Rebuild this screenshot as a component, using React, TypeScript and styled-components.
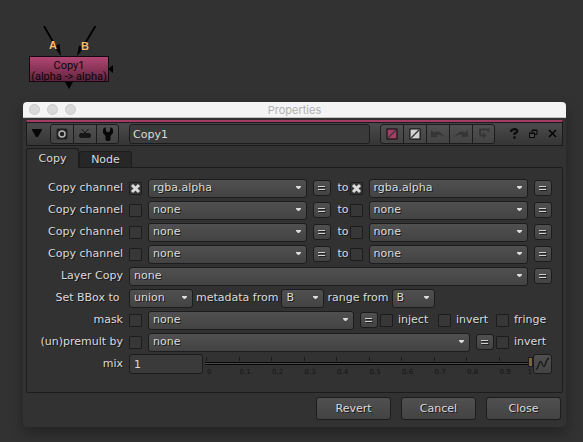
import React, { useState } from "react";
import styled, { createGlobalStyle, css } from "styled-components";

const GlobalStyle = createGlobalStyle`
  * { box-sizing: border-box; }
  body {
    margin: 0;
    background: #323232;
    color: #dadada;
    font: 11px/14px "DejaVu Sans", Verdana, sans-serif;
    overflow: hidden;
  }
  button, input, select { font: inherit; color: inherit; margin: 0; padding: 0; }
`;

const raised = css`
  background: linear-gradient(#505050, #434343);
  border: 1px solid #1c1c1c;
  border-radius: 3px;
`;

const textShadow = css`
  text-shadow: 1px 1px 0 #191919;
`;

const Graph = styled.section`
  position: relative;
  height: 102px;
`;

const GraphDrawing = styled.svg`
  display: block;
`;

const GraphNode = styled.div`
  position: absolute;
  left: 29px;
  top: 56px;
  width: 80px;
  height: 26px;
  padding-top: 3px;
  border: 1px solid #16080e;
  background: linear-gradient(#b14673, #7f3050 65%, #5d2440);
  color: #0c0508;
  font: 11px/11px Roboto, "Liberation Sans", sans-serif;
  text-align: center;
  white-space: pre;
`;

const Window = styled.main`
  margin: 0 17px 15px 23px;
  background: #323232;
  border-radius: 4px;
  box-shadow: 0 6px 14px rgba(0, 0, 0, 0.3);
`;

const TitleBar = styled.header`
  display: grid;
  grid-template-columns: 1fr auto 1fr;
  align-items: center;
  height: 16px;
  padding: 0 6px;
  background: #f4f4f4;
  border-bottom: 1px solid #c4c4c4;
  border-radius: 4px 4px 0 0;
`;

const Lights = styled.div`
  display: flex;
  gap: 7px;
`;

const Light = styled.button`
  width: 11px;
  height: 11px;
  border: 1px solid #cbcbcb;
  border-radius: 50%;
  background: #d9d9d9;
`;

const Title = styled.h1`
  margin: 0;
  color: #b0b0b3;
  font: 11px/14px Inter, "Open Sans", sans-serif;
`;

const Body = styled.div`
  padding: 2px 3px 7px;
`;

const Toolbar = styled.div`
  display: flex;
  align-items: center;
  height: 26px;
  border: 1px solid #1b1b1b;
  border-top: 2px solid #a33d63;
  background: linear-gradient(#3f3f3f, #4a4a4a 10%, #353535);
  box-shadow: inset 0 1px 0 #1b1b1b;
`;

const PlainButton = styled.button<{ $w?: number }>`
  display: grid;
  place-items: center;
  width: ${(p) => p.$w ?? 19}px;
  height: 20px;
  border: 0;
  background: none;
`;

const ToolGroup = styled.div`
  ${raised}
  display: flex;
  height: 20px;
  margin-left: 3px;
`;

const ToolButton = styled.button`
  display: grid;
  place-items: center;
  width: 23px;
  border: 0;
  background: none;
  & + & { border-left: 1px solid #1c1c1c; }
  &:first-child { width: 22px; }
  &:last-child { width: 22px; }
`;

const TextInput = styled.input<{ $w?: number }>`
  flex: ${(p) => (p.$w ? `0 0 ${p.$w}px` : "1 1 0")};
  min-width: 0;
  height: 20px;
  padding: 1px 4px 0;
  border: 1px solid #1c1c1c;
  border-radius: 3px;
  background: #3a3a3a;
  outline: none;
`;

const NameInput = styled(TextInput)`
  margin: 0 7px 0 10px;
  padding-left: 3px;
`;

const WindowButtons = styled.div`
  display: flex;
  margin-left: 10px;
`;

const Tabs = styled.div`
  display: flex;
  align-items: flex-end;
  height: 21px;
`;

const Tab = styled.button<{ $active?: boolean }>`
  ${textShadow}
  width: 53px;
  height: ${(p) => (p.$active ? 20 : 16)}px;
  margin-bottom: ${(p) => (p.$active ? -1 : 0)}px;
  border: 1px solid #1c1c1c;
  border-bottom: 0;
  border-radius: 3px 3px 0 0;
  background: ${(p) => (p.$active ? "#323232" : "#272727")};
  z-index: ${(p) => (p.$active ? 1 : 0)};
`;

const Panel = styled.section`
  padding: 9px 10px 17px 0;
  border: 1px solid #1c1c1c;
  border-radius: 0 2px 2px 2px;
`;

const Row = styled.div`
  display: flex;
  align-items: center;
  height: 22px;
  gap: 6px;
`;

const Tight = styled.div<{ $fixed?: boolean; $gap?: number }>`
  display: flex;
  flex: ${(p) => (p.$fixed ? "none" : 1)};
  align-items: center;
  gap: ${(p) => p.$gap ?? 2}px;
`;

const RowLabel = styled.label`
  ${textShadow}
  flex: 0 0 96px;
  text-align: right;
  white-space: nowrap;
`;

const Word = styled.span`
  ${textShadow}
  white-space: nowrap;
`;

const ToGroup = styled.label`
  display: flex;
  align-items: center;
  gap: 1px;
`;

const Option = styled.label`
  display: flex;
  flex: 0 0 56px;
  align-items: center;
  gap: 5px;
`;

const CheckBox = styled.span`
  position: relative;
  display: block;
  flex: none;
  width: 13px;
  height: 13px;
`;

const CheckInput = styled.input`
  appearance: none;
  display: block;
  width: 13px;
  height: 13px;
  border: 1px solid #1c1c1c;
  border-radius: 1px;
  background: #373737;
`;

const CheckMark = styled.svg`
  position: absolute;
  left: 1px;
  top: 1px;
  pointer-events: none;
`;

const SelectBox = styled.span<{ $w?: number }>`
  position: relative;
  display: block;
  flex: ${(p) => (p.$w ? `0 0 ${p.$w}px` : "1 1 0")};
  min-width: 0;
`;

const SelectInput = styled.select`
  ${raised}
  ${textShadow}
  appearance: none;
  display: block;
  width: 100%;
  height: 19px;
  padding: 0 16px 0 4px;
  outline: none;
`;

const SelectArrow = styled.svg`
  position: absolute;
  right: 6px;
  top: 7px;
  pointer-events: none;
`;

const SquareButton = styled.button`
  ${raised}
  display: grid;
  place-items: center;
  flex: none;
  width: 18px;
  height: 16px;
`;

const CurveButton = styled(SquareButton)`
  width: 19px;
  height: 20px;
`;

const Slider = styled.div`
  position: relative;
  flex: 1;
  height: 20px;
`;

const Scale = styled.div`
  display: flex;
  justify-content: space-between;
  padding: 3px 1px 0 1px;
`;

const Tick = styled.span`
  width: 0;
  height: 18px;
  padding-top: 11px;
  border-left: 1px solid;
  border-image: linear-gradient(#191919 5px, transparent 5px) 1;
  color: #141414;
  font-size: 7px;
  line-height: 8px;
  white-space: nowrap;
  &:last-child { direction: rtl; }
`;

const Range = styled.input`
  position: absolute;
  inset: 0;
  width: 100%;
  height: 18px;
  appearance: none;
  background: none;
  &::-webkit-slider-runnable-track {
    height: 3px;
    background: #4a4a4a;
    border: solid #060606;
    border-width: 1px 0;
  }
  &::-webkit-slider-thumb {
    appearance: none;
    width: 5px;
    height: 10px;
    margin-top: -6px;
    background: #7a6730;
    border: 1px solid #1c1c1c;
  }
`;

const Footer = styled.footer`
  display: flex;
  justify-content: flex-end;
  gap: 10px;
  padding: 4px 2px 0 0;
`;

const FooterButton = styled.button`
  ${raised}
  ${textShadow}
  width: 75px;
  height: 23px;
`;

function Check({ id, label, on = false }: { id?: string; label?: string; on?: boolean }) {
  const [checked, setChecked] = useState(on);
  return (
    <CheckBox>
      <CheckInput id={id} type="checkbox" aria-label={label} checked={checked} onChange={() => setChecked(!checked)} />
      {checked && (
        <CheckMark width="11" height="11" viewBox="0 0 11 11">
          <path d="M2 2 9 9M9 2 2 9" stroke="#dadada" strokeWidth="3" />
        </CheckMark>
      )}
    </CheckBox>
  );
}

function Select({ id, label, value, w }: { id?: string; label: string; value: string; w?: number }) {
  return (
    <SelectBox $w={w}>
      <SelectInput id={id} aria-label={label} defaultValue={value}>
        <option>{value}</option>
      </SelectInput>
      <SelectArrow width="5" height="3" viewBox="0 0 5 3">
        <path d="M0 0H5V1L3 3H2L0 1Z" fill="#dcdcdc" />
      </SelectArrow>
    </SelectBox>
  );
}

function Equals() {
  return (
    <SquareButton aria-label="Set expression">
      <svg width="8" height="6" viewBox="0 0 8 6">
        <path d="M1 2.500H8M1 5.500H8" stroke="#202020" />
        <path d="M0 1.500H7M0 4.500H7" stroke="#d0d0d0" />
      </svg>
    </SquareButton>
  );
}

function ChannelRow({ n, value, on }: { n: number; value: string; on?: boolean }) {
  return (
    <Row>
      <RowLabel htmlFor={`from${n}`}>Copy channel</RowLabel>
      <Check id={`from${n}`} on={on} />
      <Select label={`Source channel ${n}`} value={value} />
      <Equals />
      <ToGroup>
        <Word>to</Word>
        <Check on={on} />
      </ToGroup>
      <Select label={`Target channel ${n}`} value={value} />
      <Equals />
    </Row>
  );
}

const ticks = ["0", "0.1", "0.2", "0.3", "0.4", "0.5", "0.6", "0.7", "0.8", "0.9", "1"];

export default function App() {
  return (
    <>
      <GlobalStyle />
      <Graph>
        <GraphDrawing width="140" height="102" viewBox="0 0 140 102">
          <path d="M44 26 56 47M95.500 26 84 45" stroke="#000" strokeWidth="1.800" />
          <path d="M61 56 54 47 59.500 44ZM77 56 79 45.500 84 48Z" />
          <path d="M108 69 113 65V73ZM65 82H73L69 89Z" />
          <g fill="#f7bd68" fontFamily="Liberation Sans, Arial, sans-serif" fontSize="11" fontWeight="bold">
            <text x="49" y="49">A</text>
            <text x="81" y="50">B</text>
          </g>
        </GraphDrawing>
        <GraphNode>{"Copy1\n(alpha -> alpha)"}</GraphNode>
      </Graph>
      <Window>
        <TitleBar>
          <Lights>
            <Light aria-label="Close window" />
            <Light aria-label="Minimize window" />
            <Light aria-label="Zoom window" />
          </Lights>
          <Title>Properties</Title>
        </TitleBar>
        <Body>
          <Toolbar>
            <PlainButton $w={20} aria-label="Collapse">
              <svg width="10" height="9" viewBox="0 0 10 9"><path d="M0 0H10V1L6 8H4L0 1Z" fill="#080808" /></svg>
            </PlainButton>
            <ToolGroup>
              <ToolButton aria-label="Center in graph">
                <svg width="12" height="12" viewBox="0 0 12 12">
                  <rect x="0.500" y="0.500" width="11" height="11" rx="2" fill="#202020" />
                  <circle cx="6" cy="6" r="3" fill="none" stroke="#b5b5b5" strokeWidth="1.500" />
                </svg>
              </ToolButton>
              <ToolButton aria-label="Monitor">
                <svg width="14" height="12" viewBox="0 0 14 12">
                  <path d="M3.500 1 7 5 10.500 1" fill="none" stroke="#171717" />
                  <path d="M2 5H12V6H13V9H12V10H2V9H1V6H2Z" fill="#171717" />
                </svg>
              </ToolButton>
              <ToolButton aria-label="Manage knobs">
                <svg width="12" height="14" viewBox="0 0 12 14">
                  <path d="M3.500 0 4 4 5 5H7L8 4 8.500 0 11 2V6L8.500 9V13L7 14H5L3.500 13V9L1 6V2Z" fill="#080808" />
                </svg>
              </ToolButton>
            </ToolGroup>
            <NameInput aria-label="Node name" defaultValue="Copy1" />
            <ToolGroup>
              {["#a33e64", "#d3d3d3"].map((c) => (
                <ToolButton key={c} aria-label="Node color">
                  <svg width="12" height="12" viewBox="0 0 12 12">
                    <rect x="1" y="1" width="10" height="10" fill={c} stroke="#080808" />
                    <path d="M2 10 10 2" stroke="#383838" strokeWidth="1.500" />
                  </svg>
                </ToolButton>
              ))}
              <ToolButton aria-label="Undo">
                <svg width="14" height="8" viewBox="0 0 14 8"><path d="M0 0 3 2.500Q8-1 14 7 9 4 5.500 5L7 7H0Z" fill="#363636" /></svg>
              </ToolButton>
              <ToolButton aria-label="Redo">
                <svg width="14" height="8" viewBox="0 0 14 8"><path d="M14 0 11 2.500Q6-1 0 7 5 4 8.500 5L7 7H14Z" fill="#363636" /></svg>
              </ToolButton>
              <ToolButton aria-label="Revert knobs">
                <svg width="12" height="12" viewBox="0 0 12 12">
                  <path d="M2 7V1.500H10.500V4M2 7.500H6" fill="none" stroke="#363636" strokeWidth="2" />
                  <path d="M5 4V11L9 7.500Z" fill="#363636" />
                </svg>
              </ToolButton>
            </ToolGroup>
            <WindowButtons>
              <PlainButton aria-label="Help">
                <svg width="9" height="11" viewBox="0 0 9 11">
                  <path d="M1.200 4V2.500Q4.500 0 7 2.200 8 4.500 4.500 5.500V7" fill="none" stroke="#0b0b0b" strokeWidth="2.200" />
                  <rect x="3.300" y="8.300" width="2.400" height="2.400" fill="#0b0b0b" />
                </svg>
              </PlainButton>
              <PlainButton aria-label="Float">
                <svg width="9" height="9" viewBox="0 0 9 9">
                  <path d="M3 4V1H8V5.500H6M3 1.500H8" fill="none" stroke="#080808" />
                  <rect x="0.500" y="4" width="5" height="4.500" fill="#484848" stroke="#080808" />
                  <path d="M0 4.500H6" stroke="#080808" />
                </svg>
              </PlainButton>
              <PlainButton aria-label="Close panel">
                <svg width="9" height="9" viewBox="0 0 9 9"><path d="M1 1 8 8M8 1 1 8" stroke="#050505" strokeWidth="1.600" /></svg>
              </PlainButton>
            </WindowButtons>
          </Toolbar>
          <Tabs role="tablist">
            <Tab role="tab" aria-selected $active>Copy</Tab>
            <Tab role="tab">Node</Tab>
          </Tabs>
          <Panel>
            <ChannelRow n={1} value="rgba.alpha" on />
            <ChannelRow n={2} value="none" />
            <ChannelRow n={3} value="none" />
            <ChannelRow n={4} value="none" />
            <Row>
              <RowLabel htmlFor="layer">Layer Copy</RowLabel>
              <Select id="layer" label="Layer Copy" value="none" />
              <Equals />
            </Row>
            <Row>
              <RowLabel htmlFor="bbox">Set BBox to&nbsp;</RowLabel>
              <Tight $gap={3}>
                <Select id="bbox" label="Set BBox to" value="union" w={64} />
                <Word>metadata from</Word>
                <Select label="metadata from" value="B" w={43} />
                <Word>range from</Word>
                <Select label="range from" value="B" w={43} />
              </Tight>
            </Row>
            <Row>
              <RowLabel htmlFor="mask">mask</RowLabel>
              <Check id="mask" />
              <Select label="mask channel" value="none" />
              <Tight $fixed>
                <Equals />
                <Option><Check /><Word>inject</Word></Option>
                <Option><Check /><Word>invert</Word></Option>
                <Option><Check /><Word>fringe</Word></Option>
              </Tight>
            </Row>
            <Row>
              <RowLabel htmlFor="premult">(un)premult by</RowLabel>
              <Check id="premult" />
              <Select label="premult channel" value="none" />
              <Tight $fixed>
                <Equals />
                <Option><Check /><Word>invert</Word></Option>
              </Tight>
            </Row>
            <Row>
              <RowLabel htmlFor="mix">mix</RowLabel>
              <Tight>
                <TextInput id="mix" $w={74} defaultValue="1" />
                <Tight $gap={0}>
                  <Slider>
                    <Scale>
                      {ticks.map((t) => <Tick key={t}>{t}</Tick>)}
                    </Scale>
                    <Range type="range" aria-label="mix amount" min="0" max="1" step="0.01" defaultValue="1" />
                  </Slider>
                  <CurveButton aria-label="Animation">
                    <svg width="15" height="14" viewBox="0 0 15 14">
                      <path d="M1 12.500C4 11 3.500 4.500 5.500 4.500S7 10 9 9.500 10 3 14 1" fill="none" stroke="#1c1c1c" strokeWidth="1.500" />
                    </svg>
                  </CurveButton>
                </Tight>
              </Tight>
            </Row>
          </Panel>
          <Footer>
            <FooterButton>Revert</FooterButton>
            <FooterButton>Cancel</FooterButton>
            <FooterButton>Close</FooterButton>
          </Footer>
        </Body>
      </Window>
    </>
  );
}
